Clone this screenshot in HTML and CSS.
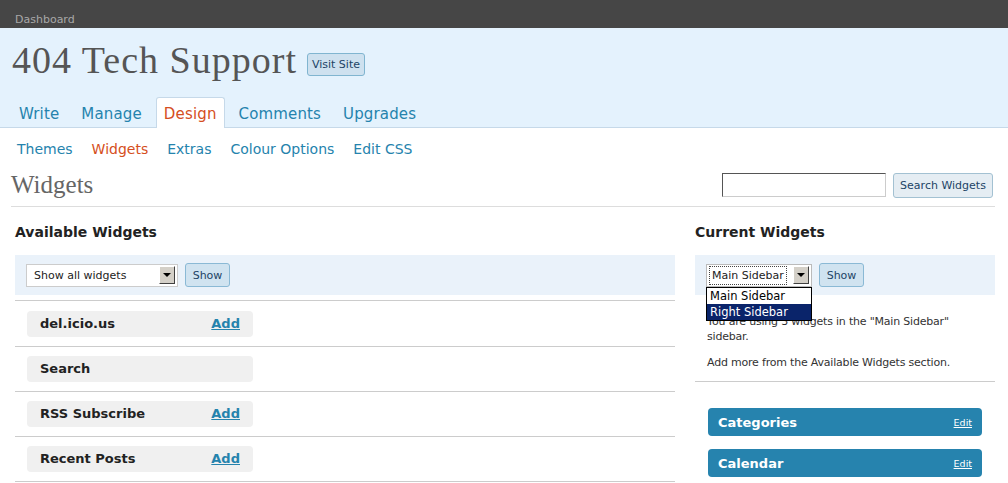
FILE: index.html
```html
<!DOCTYPE html>
<html>
  <head>
    <title>Widgets &lsaquo; 404 Tech Support</title>
    <link rel="stylesheet" href="styles.css">
  </head>

  <body>
    <div id="topbar">Dashboard</div>

    <div id="header">
        <div id="blog-title">
            <h1>404 Tech Support</h1>
            <a class="btn visit" href="#">Visit Site</a>
        </div>
        <ul id="tabs">
            <li><a href="#">Write</a></li>
            <li><a href="#">Manage</a></li>
            <li class="current"><a href="#">Design</a></li>
            <li><a href="#">Comments</a></li>
            <li><a href="#">Upgrades</a></li>
        </ul>
    </div>

    <ul id="submenu">
        <li><a href="#">Themes</a></li>
        <li class="current"><a href="#">Widgets</a></li>
        <li><a href="#">Extras</a></li>
        <li><a href="#">Colour Options</a></li>
        <li><a href="#">Edit CSS</a></li>
    </ul>

    <div id="wrap">
        <div id="pagehead">
            <h2>Widgets</h2>
            <form id="search-form">
                <input type="text" class="search-input">
                <button type="button" class="btn search">Search Widgets</button>
            </form>
        </div>

        <div id="columns">
            <div id="available">
                <h3>Available Widgets</h3>
                <div class="bar">
                    <div class="fake-select wide">
                        <span class="sel-text">Show all widgets</span>
                        <span class="sel-arrow"></span>
                    </div>
                    <button type="button" class="btn show">Show</button>
                </div>
                <ul id="widget-list">
                    <li><div class="widget"><span>del.icio.us</span><a href="#">Add</a></div></li>
                    <li><div class="widget"><span>Search</span></div></li>
                    <li><div class="widget"><span>RSS Subscribe</span><a href="#">Add</a></div></li>
                    <li><div class="widget"><span>Recent Posts</span><a href="#">Add</a></div></li>
                </ul>
            </div>

            <div id="current">
                <h3>Current Widgets</h3>
                <div class="bar">
                    <div class="fake-select narrow">
                        <span class="sel-text focused">Main Sidebar</span>
                        <span class="sel-arrow"></span>
                        <ul class="sel-options">
                            <li>Main Sidebar</li>
                            <li class="picked">Right Sidebar</li>
                        </ul>
                    </div>
                    <button type="button" class="btn show">Show</button>
                </div>
                <div class="info">
                    <p>You are using 3 widgets in the "Main Sidebar" sidebar.</p>
                    <p class="more">Add more from the Available Widgets section.</p>
                </div>
                <ul id="sidebar-widgets">
                    <li class="sb-widget"><span>Categories</span><a href="#">Edit</a></li>
                    <li class="sb-widget"><span>Calendar</span><a href="#">Edit</a></li>
                </ul>
            </div>
        </div>
    </div>
  </body>
</html>
```

FILE: styles.css
```css
body {
  margin: 0;
  background-color: #fff;
  color: #333;
  font-family: 'DejaVu Sans', sans-serif;
  font-size: 11px;
}

ul {
  list-style: none;
  margin: 0;
  padding: 0;
}

a {
  text-decoration: none;
}

/* top bar */

#topbar {
  background-color: #464646;
  color: #a8a8a8;
  height: 16px;
  padding: 12px 15px 0;
  line-height: 15px;
}

/* header */

#header {
  background-color: #e4f2fd;
  border-bottom: 1px solid #c6d9e9;
  padding: 9px 12px 0;
}

#blog-title {
  display: flex;
  align-items: flex-end;
}

#blog-title h1 {
  margin: 0;
  font-family: 'Liberation Serif', serif;
  font-weight: normal;
  font-size: 38px;
  letter-spacing: 1px;
  line-height: 46px;
  color: #555;
}

.btn {
  font-family: 'DejaVu Sans', sans-serif;
  font-size: 11px;
  color: #246;
  border: 1px solid #80b5d0;
  border-radius: 3px;
  background-color: #cee1ef;
  box-sizing: border-box;
  padding: 0;
}

.visit {
  display: block;
  margin: 0 0 7px 10px;
  width: 58px;
  height: 23px;
  line-height: 21px;
  text-align: center;
}

#tabs {
  display: flex;
  gap: 6px;
  margin: 14px 0 -1px -1px;
  position: relative;
}

#tabs li a {
  display: block;
  padding: 6px 7px 4px;
  border: 1px solid transparent;
  border-bottom: none;
  border-radius: 3px 3px 0 0;
  font-size: 15px;
  letter-spacing: 0.15px;
  line-height: 20px;
  color: #2583ad;
}

#tabs li.current a {
  background-color: #fff;
  border-color: #c6d9e9;
  color: #d54e21;
}

/* submenu */

#submenu {
  display: flex;
  gap: 19px;
  padding: 12px 0 0 17px;
  line-height: 19px;
}

#submenu a {
  font-size: 14px;
  color: #2583ad;
}

#submenu li.current a {
  color: #d54e21;
}

/* page */

#wrap {
  margin: 0 13px 0 11px;
}

#pagehead {
  display: flex;
  justify-content: space-between;
  align-items: center;
  padding: 10px 0 6px;
  border-bottom: 1px solid #ddd;
}

#pagehead h2 {
  margin: 0;
  font-family: 'Liberation Serif', serif;
  font-weight: normal;
  font-size: 25px;
  line-height: 30px;
  color: #666;
}

#search-form {
  display: flex;
  align-items: center;
  gap: 7px;
  margin: 0 2px 0 0;
}

.search-input {
  width: 164px;
  height: 24px;
  box-sizing: border-box;
  border: 1px solid;
  border-color: #555 #ccc #ccc #555;
  margin: 0;
}

.search {
  width: 100px;
  height: 25px;
  background-color: #e5edf3;
  border-color: #a3c1d2;
}

#columns {
  display: flex;
  gap: 20px;
  padding-left: 4px;
}

#available {
  width: 660px;
}

#current {
  width: 300px;
  position: relative;
}

h3 {
  margin: 16px 0 14px;
  font-size: 14px;
  line-height: 18px;
  color: #222;
}

.bar {
  display: flex;
  align-items: center;
  gap: 7px;
  height: 40px;
  padding: 0 11px;
  background-color: #eaf2fa;
}

.show {
  width: 45px;
  height: 24px;
  background-color: #d0e3f0;
  border-color: #8ab9d5;
}

/* the two drop downs, drawn by hand */

.fake-select {
  position: relative;
  display: flex;
  align-items: center;
  justify-content: space-between;
  height: 23px;
  box-sizing: border-box;
  padding: 0 2px 0 3px;
  background-color: #fff;
  border: 1px solid #ccc;
}

.fake-select.wide {
  width: 152px;
}

.fake-select.narrow {
  width: 106px;
  padding-left: 2px;
  border-color: #bbb;
}

.sel-text {
  padding: 0 3px;
  line-height: 17px;
  white-space: nowrap;
  color: #222;
  border: 1px dotted transparent;
}

.sel-text.focused {
  padding: 0 2px;
  border-color: #444;
}

.sel-arrow {
  position: relative;
  flex: none;
  width: 16px;
  height: 18px;
  box-sizing: border-box;
  background-color: #d4d0c8;
  border: 1px solid;
  border-color: #fff #404040 #404040 #fff;
}

.sel-arrow::after {
  content: "";
  position: absolute;
  left: 3px;
  top: 6px;
  border-left: 4px solid transparent;
  border-right: 4px solid transparent;
  border-top: 4px solid #000;
}

.sel-options {
  position: absolute;
  left: -1px;
  top: 22px;
  width: 106px;
  box-sizing: border-box;
  border: 1px solid #000;
  background-color: #fff;
  z-index: 2;
}

.sel-options li {
  padding: 0 3px;
  font-size: 11.5px;
  line-height: 16px;
  white-space: nowrap;
  color: #000;
}

.sel-options li.picked {
  background-color: #0a246a;
  color: #fff;
}

/* available list */

#widget-list {
  margin-top: 5px;
  border-top: 1px solid #ccc;
}

#widget-list li {
  padding: 9px 0 9px 12px;
  border-bottom: 1px solid #ccc;
}

#widget-list li:first-child {
  padding-top: 10px;
}

.widget {
  display: flex;
  justify-content: space-between;
  width: 226px;
  height: 26px;
  box-sizing: border-box;
  padding: 0 13px;
  border-radius: 4px;
  background-color: #f0f0f0;
  font-size: 13px;
  font-weight: bold;
  line-height: 26px;
  color: #222;
}

.widget a {
  color: #2583ad;
  text-decoration: underline;
}

/* current widgets */

.info {
  padding: 19px 12px 11px;
  border-bottom: 1px solid #ccc;
}

.info p {
  margin: 0;
  line-height: 15px;
  letter-spacing: -0.2px;
}

.info p.more {
  margin-top: 11px;
}

#sidebar-widgets {
  padding: 26px 13px 0;
}

.sb-widget {
  display: flex;
  justify-content: space-between;
  align-items: center;
  height: 28px;
  padding: 0 10px;
  margin-bottom: 13px;
  border-radius: 4px;
  background-color: #2683ae;
  color: #fff;
  font-size: 13px;
  font-weight: bold;
}

.sb-widget a {
  color: #fff;
  font-size: 9.5px;
  font-weight: normal;
  text-decoration: underline;
}
```
